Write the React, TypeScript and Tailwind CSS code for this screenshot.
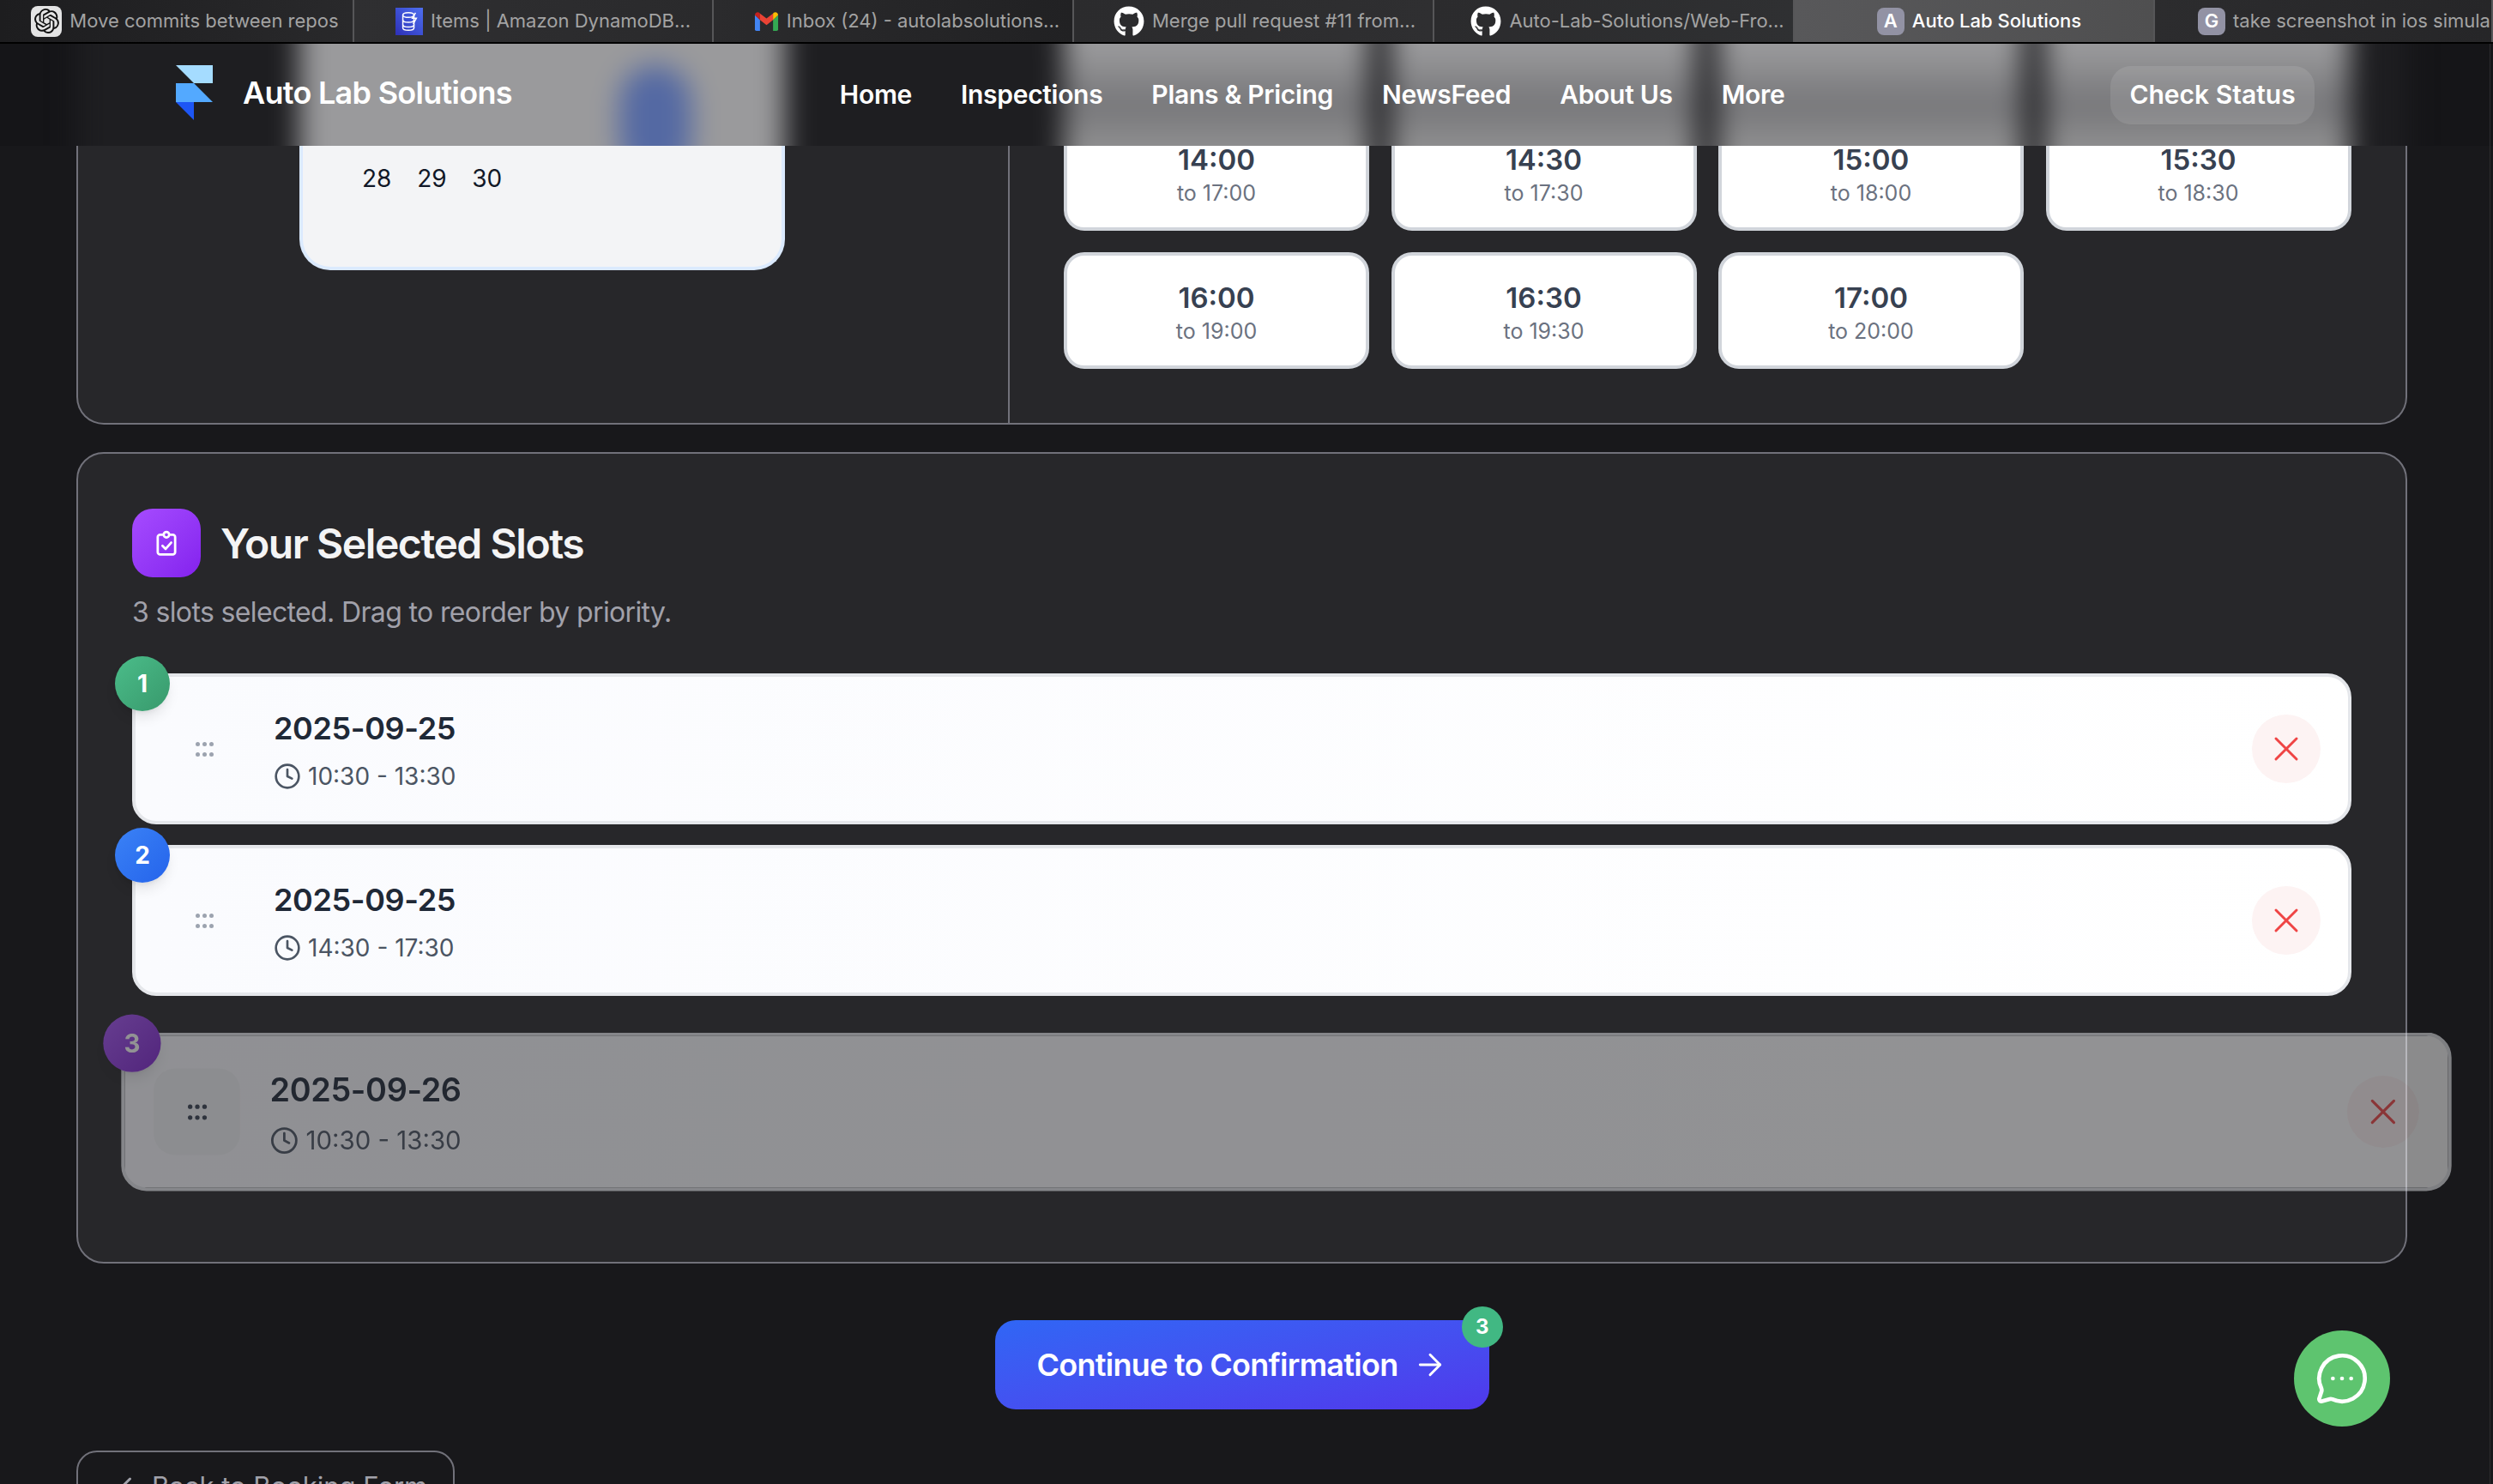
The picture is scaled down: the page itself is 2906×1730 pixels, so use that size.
import React from 'react';
import { ArrowRight, ChevronLeft, Clock, MessageCircleMore, X } from 'lucide-react';
import { FaGithub } from 'react-icons/fa';
import { SiOpenai } from 'react-icons/si';

const tabs = [
  { title: 'Move commits between repos', icon: 'gpt', cls: 'w-[413px] pl-[20px] justify-center bg-gradient-to-r from-[#1d1d1f] to-[#29292b] text-[#a3a3a3]' },
  { title: 'Items | Amazon DynamoDB...', icon: 'dynamo', cls: 'w-[419px] pl-[23px] justify-center bg-gradient-to-r from-[#2f2f31] to-[#2a2a2c] text-[#a3a3a3]' },
  { title: 'Inbox (24) - autolabsolutions...', icon: 'gmail', cls: 'w-[420px] pl-[32px] justify-center bg-gradient-to-r from-[#2b2b2d] to-[#212123] text-[#a3a3a3]' },
  { title: 'Merge pull request #11 from...', icon: 'github', cls: 'w-[420px] pl-[26px] justify-center bg-gradient-to-r from-[#2b2b2d] to-[#2f2f31] text-[#a3a3a3]' },
  { title: 'Auto-Lab-Solutions/Web-Fro...', icon: 'github', cls: 'w-[420px] pl-[32px] justify-center bg-gradient-to-r from-[#2b2b2d] to-[#2f3032] text-[#a3a3a3]' },
  { title: 'Auto Lab Solutions', icon: 'A', cls: 'w-[420px] pl-[12px] justify-center bg-gradient-to-r from-[#58585a] to-[#4f4f50] text-white font-medium' },
  { title: 'take screenshot in ios simula...', icon: 'G', cls: 'flex-1 pl-[50px] justify-start bg-gradient-to-r from-[#2c2c2e] to-[#262628] text-[#a3a3a3]' },
];

const navLinks = ['Home', 'Inspections', 'Plans & Pricing', 'NewsFeed', 'About Us', 'More'];

const slotRows = [
  ['14:00', '14:30', '15:00', '15:30'],
  ['16:00', '16:30', '17:00'],
];

const endTime = (t: string) => {
  const [h, m] = t.split(':');
  return `to ${Number(h) + 3}:${m}`;
};

const TabIcon = ({ icon }: { icon: string }) => {
  if (icon === 'gpt') {
    return (
      <div className="w-9 h-9 rounded-lg bg-[#e4e4e4] flex items-center justify-center shrink-0">
        <SiOpenai size={29} color="#111111" />
      </div>
    );
  }
  if (icon === 'dynamo') {
    return (
      <div className="w-8 h-8 bg-gradient-to-tr from-[#2e2fb8] to-[#4f6ff0] flex items-center justify-center shrink-0">
        <svg width="22" height="26" viewBox="0 0 22 28" fill="none" stroke="#fff" strokeWidth="1.6">
          <ellipse cx="10" cy="6" rx="7" ry="3" />
          <path d="M3 6v16c0 1.700 3 3 7 3s7-1.300 7-3V6" />
          <path d="M3 12c0 1.700 3 3 7 3s7-1.300 7-3M3 18c0 1.700 3 3 7 3s7-1.300 7-3" />
          <path d="M19 3l-4 7h5l-4 7" />
        </svg>
      </div>
    );
  }
  if (icon === 'gmail') {
    return (
      <svg width="29" height="22" viewBox="0 0 32 26" fill="none" className="shrink-0">
        <path d="M0 4v20a2 2 0 0 0 2 2h5V11z" fill="#4285f4" />
        <path d="M32 4v20a2 2 0 0 1-2 2h-5V11z" fill="#34a853" />
        <path d="M0 4c0-3 3.500-5 6-3l1 1v9z" fill="#c5221f" />
        <path d="M7 2l9 7 9-7v9l-9 7-9-7z" fill="#ea4335" />
        <path d="M32 4c0-3-3.500-5-6-3l-1 1v9z" fill="#fbbc04" />
      </svg>
    );
  }
  if (icon === 'github') {
    return <FaGithub size={36} color="#ffffff" className="shrink-0" />;
  }
  return (
    <div className="w-8 h-8 rounded-lg bg-[#9292a4] flex items-center justify-center text-white text-[22px] font-semibold shrink-0">
      {icon}
    </div>
  );
};

const Logo = () => (
  <svg width="43" height="64" viewBox="0 0 43 64" className="shrink-0">
    <polygon points="0,0 43,0 43,21 21,21" fill="#a5dcff" />
    <polygon points="0,21 21,21 43,43 0,43" fill="#53a9ff" />
    <polygon points="0,43 21,43 21,64" fill="#1d56f5" />
  </svg>
);

// the frosted look of the nav: soft copies of what scrolls under it
const NavBackdrop = () => (
  <div className="absolute inset-0 blur-[16px]">
    <div className="absolute left-[89px] w-[2717px] -top-[60px] h-[239px] bg-[#1e1e21]" />
    <div className="absolute left-[349px] w-[566px] -top-[60px] h-[239px] bg-[#9a9a9c]" />
    <div className="absolute left-[722px] w-[84px] top-[25px] h-[130px] rounded-full bg-[#5469a3]" />
    <div className="absolute left-[1240px] w-[356px] -top-[60px] h-[239px] bg-[linear-gradient(#9c9c9e_25%,#757578_56%,#909091_75%)]" />
    <div className="absolute left-[1621px] w-[356px] -top-[60px] h-[239px] bg-[linear-gradient(#9c9c9e_25%,#757578_56%,#909091_75%)]" />
    <div className="absolute left-[2002px] w-[356px] -top-[60px] h-[239px] bg-[linear-gradient(#9c9c9e_25%,#757578_56%,#909091_75%)]" />
    <div className="absolute left-[2383px] w-[356px] -top-[60px] h-[239px] bg-[linear-gradient(#9c9c9e_25%,#757578_56%,#909091_75%)]" />
  </div>
);

const SlotRow = ({ n, date, time, badge, className, handle, dots }: {
  n: number;
  date: string;
  time: string;
  badge: string;
  className: string;
  handle: string;
  dots: string;
}) => (
  <div className={`relative flex items-center h-[176px] px-[32px] rounded-[28px] border-4 border-[#e5e7eb] bg-gradient-to-r from-[#fafbfe] to-white ${className}`}>
    <div className={`absolute -left-[24px] -top-[24px] w-16 h-16 rounded-full flex items-center justify-center text-white text-[28px] font-bold shadow-lg ${badge}`}>
      {n}
    </div>
    <div className={`w-[96px] h-[96px] rounded-3xl flex items-center justify-center ${handle}`}>
      <div className="grid grid-cols-3 gap-x-[3px] gap-y-[7px]">
        {[0, 1, 2, 3, 4, 5].map((d) => (
          <span key={d} className={`w-[5px] h-[5px] rounded-full ${dots}`} />
        ))}
      </div>
    </div>
    <div className="ml-[33px] flex-1">
      <div className="text-[36px] leading-[56px] font-semibold tracking-[-0.01em] text-[#1f2937]">{date}</div>
      <div className="mt-[8px] flex items-center gap-[8px] text-[28px] leading-[40px] text-[#4b5563]">
        <Clock size={32} strokeWidth={2} className="text-[#4b5563]" />
        {time}
      </div>
    </div>
    <button className="w-20 h-20 rounded-full bg-[#fdf3f3] flex items-center justify-center">
      <X size={48} strokeWidth={1.5} className="text-[#ef4444]" />
    </button>
  </div>
);

const App = () => {
  return (
    <div className="relative h-screen overflow-hidden bg-[#18181b] font-['Inter',sans-serif]">
      {/* Browser tabs */}
      <div className="h-[51px] flex border-b-2 border-black bg-[#303133]">
        {tabs.map((tab) => (
          <div
            key={tab.title}
            className={`h-full flex items-center gap-[9px] border-r-2 border-[#565658] overflow-hidden ${tab.cls}`}
          >
            <TabIcon icon={tab.icon} />
            <span className="text-[22px] whitespace-nowrap">{tab.title}</span>
          </div>
        ))}
      </div>

      <div className="relative h-[1679px] overflow-hidden">
        <main className="pl-[89px] pr-[100px]">
          {/* Calendar and time slots */}
          <section className="h-[444px] grid grid-cols-[1084px_1fr] rounded-b-[32px] border-2 border-t-0 border-[#71717a] bg-[#27272a]">
            <div className="flex justify-center pr-[2px]">
              <div className="w-[566px] h-[264px] rounded-b-[36px] border-4 border-t-0 border-[#dbeafe] bg-[#f3f4f6] px-[54px] pt-[125px]">
                <div className="grid grid-cols-7 h-16">
                  {[28, 29, 30].map((d) => (
                    <div key={d} className="flex items-center justify-center text-[28px] text-[#111827]">
                      {d}
                    </div>
                  ))}
                </div>
              </div>
            </div>
            <div className="border-l-2 border-[#71717a] pl-[63px] pt-[82px]">
              <div className="flex flex-col gap-[25px]">
                {slotRows.map((row) => (
                  <div key={row[0]} className="grid grid-cols-[356px_356px_356px_356px] gap-x-[25.500px]">
                    {row.map((t) => (
                      <div key={t} className="h-[136px] pt-[3px] rounded-3xl border-4 border-[#d1d5db] bg-white flex flex-col items-center justify-center">
                        <span className="text-[33px] leading-[44px] font-semibold text-[#374151]">{t}</span>
                        <span className="mt-[1px] text-[25px] leading-[32px] text-[#6b7280]">{endTime(t)}</span>
                      </div>
                    ))}
                  </div>
                ))}
              </div>
            </div>
          </section>

          {/* Selected slots */}
          <section className="mt-[32px] h-[946px] rounded-[32px] border-2 border-[#71717a] bg-[#27272a] px-[63px] pt-[64px]">
            <div className="flex items-center gap-[23px]">
              <div className="w-20 h-20 rounded-3xl bg-gradient-to-br from-[#a64bff] to-[#8420ee] flex items-center justify-center">
                <svg width="24" height="31" viewBox="0 0 26 32" fill="none" stroke="#fff" strokeWidth="3" strokeLinecap="round" strokeLinejoin="round">
                  <path d="M8 5H5a3 3 0 0 0-3 3v19a3 3 0 0 0 3 3h16a3 3 0 0 0 3-3V8a3 3 0 0 0-3-3h-3" />
                  <circle cx="13" cy="5" r="3.500" />
                  <path d="M8 19l4 4 7-8" />
                </svg>
              </div>
              <h2 className="text-[48px] font-semibold tracking-[-0.03em] text-[#f4f4f5] mt-[2px]">Your Selected Slots</h2>
            </div>
            <p className="mt-[19px] text-[32px] leading-[44px] tracking-[-0.02em] text-[#a1a1aa]">3 slots selected. Drag to reorder by priority.</p>

            <div className="mt-[49px]">
              <SlotRow n={1} date="2025-09-25" time="10:30 - 13:30" badge="bg-gradient-to-br from-[#4bbd8a] to-[#38996c]" className="" handle="" dots="bg-[#9ca3af]" />
              <SlotRow n={2} date="2025-09-25" time="14:30 - 17:30" badge="bg-gradient-to-br from-[#3b82f6] to-[#2563eb]" className="mt-[24px]" handle="" dots="bg-[#9ca3af]" />
              <SlotRow n={3} date="2025-09-26" time="10:30 - 13:30" badge="bg-gradient-to-br from-[#a855f7] to-[#7e22ce]" className="mt-[47px] translate-x-[52px] scale-[1.05] opacity-50" handle="bg-[#f3f4f6]" dots="bg-[#374151]" />
            </div>
          </section>

          {/* Continue */}
          <div className="mt-[66px] flex justify-center">
            <button className="relative w-[576px] h-[104px] rounded-3xl bg-gradient-to-br from-[#2f66f5] to-[#4f38ec] flex items-center justify-center gap-[17px] text-[36px] font-semibold tracking-[-0.02em] text-white">
              Continue to Confirmation
              <ArrowRight size={40} strokeWidth={1.75} />
              <span className="absolute -right-4 -top-4 w-12 h-12 rounded-full bg-[#41b883] flex items-center justify-center text-[24px] font-bold">3</span>
            </button>
          </div>

          <button className="mt-[48px] w-[441px] h-[84px] rounded-3xl border-2 border-[#71717a] flex items-center gap-[12px] pl-[38px] text-[31px] text-[#a1a1aa]">
            <ChevronLeft size={36} />
            Back to Booking Form
          </button>
        </main>

        {/* Site nav */}
        <header className="absolute top-0 inset-x-0 z-20 h-[119px] overflow-hidden bg-[#151518]">
          <NavBackdrop />
          <div className="relative h-full flex items-center pl-[205px] pr-[208px]">
            <div className="flex items-center gap-[35px] mb-[6px]">
              <Logo />
              <span className="text-[36px] font-semibold tracking-[-0.02em] text-white">Auto Lab Solutions</span>
            </div>
            <nav className="ml-[382px] flex gap-[57px] text-[30px] font-semibold tracking-[-0.01em] text-white">
              {navLinks.map((link) => (
                <span key={link}>{link}</span>
              ))}
            </nav>
            <button className="ml-auto w-[238px] h-[68px] rounded-3xl bg-white/10 text-[30px] font-semibold text-white">
              Check Status
            </button>
          </div>
        </header>

        {/* Chat button */}
        <button className="absolute left-[2674px] top-[1500px] z-30 w-28 h-28 rounded-full bg-[#5ec46f] flex items-center justify-center">
          <MessageCircleMore size={64} strokeWidth={1.75} className="text-white" />
        </button>

        {/* Scrollbar track edge */}
        <div className="absolute right-0 inset-y-0 z-30 w-1 border-l border-[#2c2c2e]" />
      </div>
    </div>
  );
};

export default App;
